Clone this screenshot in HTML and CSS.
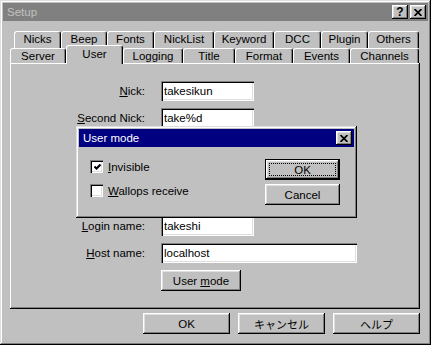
FILE: index.html
```html
<!DOCTYPE html>
<html>

<head>
    <link rel="stylesheet" href="styles.css">
</head>

<body>
    <div class="window">
        <div class="titlebar">
            <span class="title">Setup</span>
            <div class="cap-btns">
                <span class="cap-btn help">?</span>
                <span class="cap-btn">
                    <svg width="8" height="7" viewBox="0 0 8 7"><path d="M0.5 0 L7.5 7 M7.5 0 L0.5 7" stroke="#000" stroke-width="1.7"/></svg>
                </span>
            </div>
        </div>

        <div class="body">
            <div class="tabs">
                <div class="tab-row back">
                    <div class="tab" style="width:47px">Nicks</div>
                    <div class="tab" style="width:46px">Beep</div>
                    <div class="tab" style="width:47px">Fonts</div>
                    <div class="tab" style="width:60px">NickList</div>
                    <div class="tab" style="width:60px">Keyword</div>
                    <div class="tab" style="width:47px">DCC</div>
                    <div class="tab" style="width:47px">Plugin</div>
                    <div class="tab" style="width:51px">Others</div>
                </div>
                <div class="tab-row front">
                    <div class="tab" style="width:56px">Server</div>
                    <div class="tab active" style="width:57px">User</div>
                    <div class="tab" style="width:60px">Logging</div>
                    <div class="tab" style="width:52px">Title</div>
                    <div class="tab" style="width:58px">Format</div>
                    <div class="tab" style="width:57px">Events</div>
                    <div class="tab" style="width:69px">Channels</div>
                </div>
            </div>

            <div class="panel">
                <div class="form">
                    <label><u>N</u>ick:</label>
                    <input class="field short" type="text" value="takesikun">
                    <label><u>S</u>econd Nick:</label>
                    <input class="field short" type="text" value="take%d">
                    <div class="spacer"></div>
                    <div class="spacer"></div>
                    <div class="spacer"></div>
                    <label><u>L</u>ogin name:</label>
                    <input class="field short" type="text" value="takeshi">
                    <label><u>H</u>ost name:</label>
                    <input class="field long" type="text" value="localhost">
                    <span></span>
                    <button class="btn usermode">User <u>m</u>ode</button>
                </div>
            </div>

            <div class="footer">
                <button class="btn wide">OK</button>
                <button class="btn wide jp">キャンセル</button>
                <button class="btn wide jp">ヘルプ</button>
            </div>
        </div>

        <div class="dialog">
            <div class="dlg-title">
                <span class="title">User mode</span>
                <span class="cap-btn">
                    <svg width="8" height="7" viewBox="0 0 8 7"><path d="M0.5 0 L7.5 7 M7.5 0 L0.5 7" stroke="#000" stroke-width="1.7"/></svg>
                </span>
            </div>
            <div class="dlg-body">
                <div class="checks">
                    <div class="check">
                        <span class="box">
                            <svg width="7" height="7" viewBox="0 0 7 7"><path d="M0.5 2.5 L2.5 4.5 L6.5 0.5" fill="none" stroke="#000" stroke-width="2"/></svg>
                        </span>
                        <span><u>I</u>nvisible</span>
                    </div>
                    <div class="check">
                        <span class="box"></span>
                        <span><u>W</u>allops receive</span>
                    </div>
                </div>
                <div class="dlg-btns">
                    <button class="btn default">OK</button>
                    <button class="btn">Cancel</button>
                </div>
            </div>
        </div>
    </div>
</body>

</html>
```

FILE: styles.css
```css
body {
    margin: 0;
    font: 11.5px "Liberation Sans", "Noto Sans CJK JP", sans-serif;
    color: #000;
    background: #c0c0c0;
}

.window {
    position: relative;
    width: 431px;
    height: 345px;
    box-sizing: border-box;
    padding: 3px;
    background: #c0c0c0;
    box-shadow: inset -1px -1px #000, inset 1px 1px #dfdfdf,
        inset -2px -2px #808080, inset 2px 2px #fff;
}

.titlebar {
    display: flex;
    align-items: center;
    height: 18px;
    padding: 0 2px;
    background: #808080;
    color: #c0c0c0;
}

.title {
    flex: 1;
    padding-left: 2px;
}

.cap-btns {
    display: flex;
    gap: 2px;
}

.cap-btn {
    display: flex;
    align-items: center;
    justify-content: center;
    width: 16px;
    height: 14px;
    box-sizing: border-box;
    background: #c0c0c0;
    color: #000;
    box-shadow: inset -1px -1px #000, inset 1px 1px #fff,
        inset -2px -2px #808080, inset 2px 2px #dfdfdf;
}

.cap-btn.help {
    font: bold 12px "Liberation Sans", sans-serif;
    line-height: 14px;
}

.body {
    padding: 10px 8px 0 7px;
}

.tabs {
    height: 32px;
}

.tab-row {
    display: flex;
}

.tab-row.back {
    height: 17px;
    padding-left: 4px;
}

.tab-row.front {
    height: 15px;
}

.tab {
    box-sizing: border-box;
    height: 100%;
    border: 1px solid #fff;
    border-right-color: #000;
    border-bottom: 0;
    border-radius: 3px 3px 0 0;
    box-shadow: inset -1px 0 #808080;
    background: #c0c0c0;
    text-align: center;
    line-height: 15px;
}

.front .tab {
    line-height: 14px;
}

.front .tab.active {
    position: relative;
    z-index: 1;
    height: 19px;
    margin-top: -3px;
    line-height: 16px;
}

.panel {
    height: 246px;
    box-sizing: border-box;
    padding: 18px 0 0 2px;
    box-shadow: inset -1px -1px #000, inset 1px 1px #fff,
        inset -2px -2px #808080;
}

.form {
    display: grid;
    grid-template-columns: 133px auto;
    column-gap: 16px;
    row-gap: 7px;
    align-items: center;
    justify-items: start;
}

.form label {
    justify-self: end;
}

.spacer {
    grid-column: span 2;
    height: 20px;
}

.field {
    height: 20px;
    box-sizing: border-box;
    border: 0;
    padding: 0 3px;
    margin: 0;
    font: inherit;
    color: #000;
    background: #fff;
    outline: none;
    box-shadow: inset 1px 1px #808080, inset 2px 2px #000,
        inset -1px -1px #fff, inset -2px -2px #dfdfdf;
}

.field.short {
    width: 93px;
}

.field.long {
    width: 196px;
}

.btn {
    position: relative;
    height: 21px;
    box-sizing: border-box;
    border: 0;
    padding: 0;
    margin: 0;
    font: inherit;
    color: #000;
    background: #c0c0c0;
    box-shadow: inset -1px -1px #000, inset 1px 1px #fff,
        inset -2px -2px #808080, inset 2px 2px #dfdfdf;
}

.btn.usermode {
    width: 80px;
}

.btn.wide {
    width: 87px;
}

.btn.jp {
    font-size: 11px;
}

.footer {
    display: flex;
    justify-content: flex-end;
    gap: 8px;
    margin-top: 4px;
}

.dialog {
    position: absolute;
    left: 76px;
    top: 126px;
    z-index: 2;
    width: 281px;
    height: 92px;
    box-sizing: border-box;
    padding: 3px;
    background: #c0c0c0;
    box-shadow: inset -1px -1px #000, inset 1px 1px #dfdfdf,
        inset -2px -2px #808080, inset 2px 2px #fff;
}

.dlg-title {
    display: flex;
    align-items: center;
    height: 18px;
    padding: 0 2px;
    background: #000080;
    color: #fff;
}

.dlg-body {
    display: flex;
    justify-content: space-between;
    padding: 12px 14px 0 11px;
}

.checks {
    display: flex;
    flex-direction: column;
    gap: 11px;
    padding-top: 1px;
}

.check {
    display: flex;
    align-items: center;
    gap: 5px;
    height: 13px;
}

.box {
    display: flex;
    align-items: center;
    justify-content: center;
    width: 13px;
    height: 13px;
    box-sizing: border-box;
    background: #fff;
    box-shadow: inset 1px 1px #808080, inset 2px 2px #000,
        inset -1px -1px #fff, inset -2px -2px #dfdfdf;
}

.box svg {
    margin: 1px 0 0 1px;
}

.dlg-btns {
    display: flex;
    flex-direction: column;
    gap: 4px;
}

.dlg-btns .btn {
    width: 75px;
}

.btn.default {
    box-shadow: inset 0 0 0 1px #000, inset -2px -2px #000,
        inset 2px 2px #fff, inset -3px -3px #808080, inset 3px 3px #dfdfdf;
}

.btn.default::after {
    content: "";
    position: absolute;
    inset: 4px;
    border: 1px dotted #000;
}
```
